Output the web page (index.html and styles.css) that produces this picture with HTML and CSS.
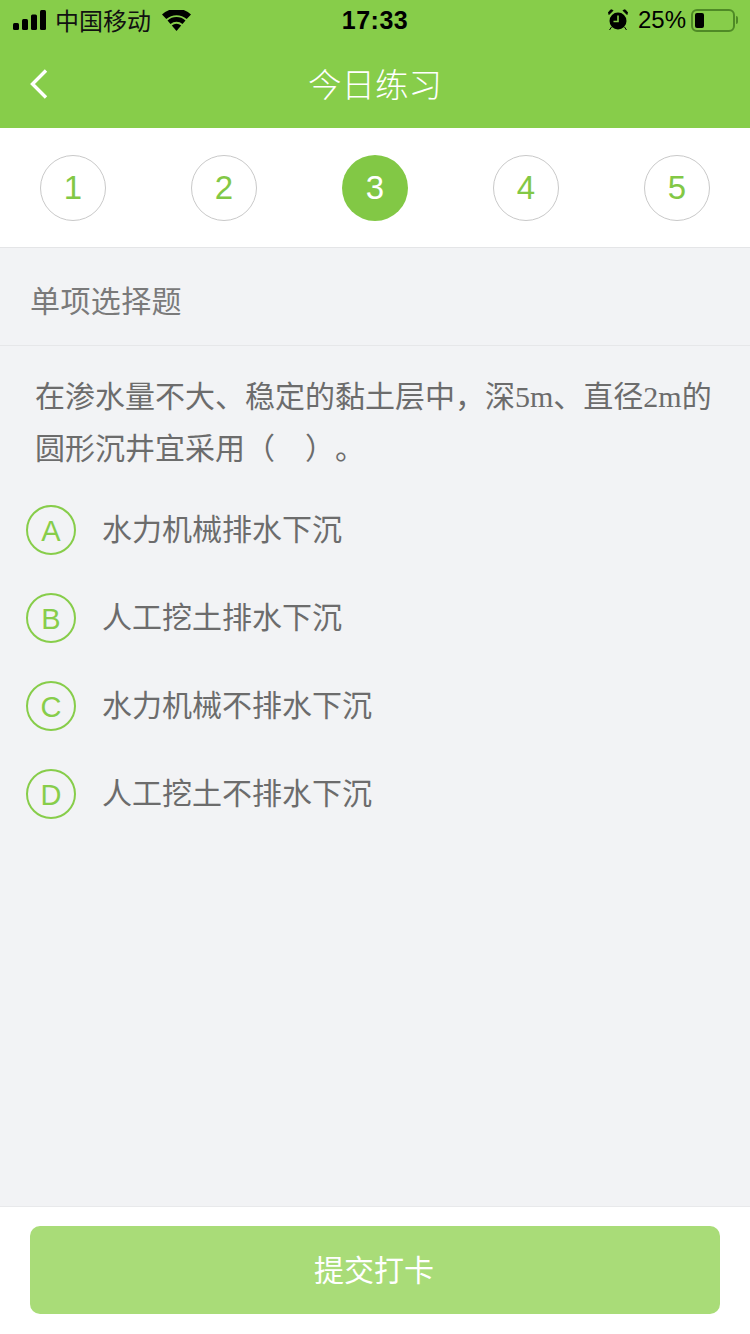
FILE: index.html
```html
<!DOCTYPE html>
<html lang="zh-CN">

<head>
    <meta charset="UTF-8">
    <meta name="viewport" content="width=device-width, initial-scale=1.0">
    <title>今日练习</title>
    <link rel="stylesheet" href="styles.css">
</head>

<body>
    <div class="header">
        <div class="status-bar">
            <div class="status-left">
                <svg class="signal" width="33" height="20" viewBox="0 0 33 20">
                    <rect x="0" y="13" width="6" height="7" rx="1.5" />
                    <rect x="9" y="9" width="6" height="11" rx="1.5" />
                    <rect x="18" y="4.500" width="6" height="15.500" rx="1.5" />
                    <rect x="27" y="0" width="6" height="20" rx="1.5" />
                </svg>
                <span class="carrier">中国移动</span>
                <svg class="wifi" width="29" height="21" viewBox="0 0 29 21">
                    <path d="M14.500 21l-4.700-5.500a7 7 0 0 1 9.400 0z" />
                    <path d="M8.500 14l-3-3.500a13.500 13.500 0 0 1 18 0l-3 3.500a9 9 0 0 0-12 0z" />
                    <path d="M4.300 9L0 4.500a21 21 0 0 1 29 0L24.700 9a15.500 15.500 0 0 0-20.400 0z" />
                </svg>
            </div>
            <div class="status-time">17:33</div>
            <div class="status-right">
                <svg class="alarm" width="20" height="22" viewBox="0 0 20 22">
                    <circle cx="10" cy="12" r="8.500" />
                    <path d="M1 5.500L5 1.500 3 .8 .6 3zM19 5.500L15 1.500 17 .8 19.400 3zM3.500 18l-2 3M16.500 18l2 3" stroke="#000" stroke-width="1" />
                    <path d="M10 6.500V12.500H5.500" fill="none" stroke="#87cd4a" stroke-width="1.600" />
                </svg>
                <span class="battery-text">25%</span>
                <div class="battery">
                    <div class="battery-level"></div>
                </div>
                <div class="battery-tip"></div>
            </div>
        </div>
        <div class="nav-bar">
            <svg class="back" width="20" height="32" viewBox="0 0 20 32">
                <path d="M17 2.500L3.500 16 17 29.500" fill="none" stroke="#fff" stroke-width="3.400" />
            </svg>
            <div class="nav-title">今日练习</div>
        </div>
    </div>

    <div class="steps">
        <div class="step">1</div>
        <div class="step">2</div>
        <div class="step active">3</div>
        <div class="step">4</div>
        <div class="step">5</div>
    </div>

    <div class="main">
        <div class="question-type">单项选择题</div>
        <div class="question">在渗水量不大、稳定的黏土层中，深<span class="latin">5m</span>、直径<span class="latin">2m</span>的圆形沉井宜采用（<span class="blank"></span>）。</div>
        <div class="options">
            <div class="option"><div class="option-mark">A</div><div class="option-text">水力机械排水下沉</div></div>
            <div class="option"><div class="option-mark">B</div><div class="option-text">人工挖土排水下沉</div></div>
            <div class="option"><div class="option-mark">C</div><div class="option-text">水力机械不排水下沉</div></div>
            <div class="option"><div class="option-mark">D</div><div class="option-text">人工挖土不排水下沉</div></div>
        </div>
    </div>

    <div class="footer">
        <button class="submit">提交打卡</button>
    </div>
</body>

</html>
```

FILE: styles.css
```css
* {
    box-sizing: border-box;
}

body {
    margin: 0;
    width: 750px;
    height: 1334px;
    display: flex;
    flex-direction: column;
    overflow: hidden;
    background-color: #f2f3f5;
    font-family: "Noto Sans CJK SC", "Liberation Sans", sans-serif;
}

.header {
    height: 128px;
    background-color: #87cd4a;
}

.status-bar {
    height: 40px;
    display: grid;
    grid-template-columns: 1fr auto 1fr;
    align-items: center;
    color: #000;
}

.status-left {
    display: flex;
    align-items: center;
    padding-left: 13px;
}

.carrier {
    margin-left: 9px;
    font-size: 24px;
    line-height: 40px;
    color: #111;
}

.wifi {
    margin-left: 11px;
}

.status-time {
    font-family: "Liberation Sans", sans-serif;
    font-size: 25px;
    font-weight: bold;
    letter-spacing: 0.5px;
}

.status-right {
    display: flex;
    align-items: center;
    justify-content: flex-end;
    padding-right: 12px;
}

.battery-text {
    margin-left: 10px;
    margin-right: 5px;
    font-family: "Liberation Sans", sans-serif;
    font-size: 24px;
}

.battery {
    width: 44px;
    height: 23px;
    padding: 2px;
    border: 2px solid #4f8a26;
    border-radius: 6px;
}

.battery-level {
    width: 9px;
    height: 100%;
    background-color: #000;
    border-radius: 2px;
}

.battery-tip {
    width: 2px;
    height: 8px;
    margin-left: 1px;
    background-color: #4f8a26;
    border-radius: 0 2px 2px 0;
}

.nav-bar {
    height: 88px;
    position: relative;
    display: flex;
    align-items: center;
    justify-content: center;
}

.back {
    position: absolute;
    left: 29px;
    top: 0;
    bottom: 0;
    margin: auto 0;
}

.nav-title {
    font-size: 33.5px;
    line-height: 48px;
    color: #fff;
    font-weight: 300;
    padding-bottom: 2px;
}

.steps {
    height: 120px;
    padding: 0 40px 0;
    display: flex;
    justify-content: space-between;
    align-items: center;
    background-color: #fff;
    border-bottom: 1px solid #e4e5e7;
}

.step {
    width: 66px;
    height: 66px;
    display: flex;
    align-items: center;
    justify-content: center;
    border: 1px solid #c9c9c9;
    border-radius: 50%;
    font-family: "Liberation Sans", sans-serif;
    font-size: 33px;
    color: #82c845;
}

.step.active {
    border: none;
    background-color: #82c845;
    color: #fff;
}

.main {
    flex: 1;
}

.question-type {
    height: 98px;
    padding: 5px 0 0 30px;
    display: flex;
    align-items: center;
    border-bottom: 1px solid #e6e7e9;
    font-size: 30px;
    letter-spacing: 0.4px;
    color: #7a7a7a;
}

.question {
    padding: 22px 34px 0 35px;
    font-size: 30px;
    line-height: 52px;
    color: #6c6c6c;
    text-spacing-trim: space-all;
}

.latin {
    font-family: "Liberation Serif", serif;
    line-height: 1;
}

.blank {
    display: inline-block;
    width: 30px;
}

.options {
    margin-top: 14px;
    padding-left: 26px;
}

.option {
    height: 88px;
    display: flex;
    align-items: center;
    gap: 26px;
    font-size: 30px;
    color: #6c6c6c;
}

.option-text {
    padding-bottom: 6px;
}

.option-mark {
    width: 50px;
    height: 50px;
    padding-top: 2px;
    display: flex;
    align-items: center;
    justify-content: center;
    border: 2px solid #87cd4a;
    border-radius: 50%;
    font-family: "Liberation Sans", sans-serif;
    font-size: 29px;
    color: #87cd4a;
}

.footer {
    height: 128px;
    padding: 19px 30px 20px;
    background-color: #fff;
    border-top: 1px solid #e8e9eb;
}

.submit {
    width: 100%;
    height: 88px;
    padding: 0 2px 4px 0;
    border: none;
    border-radius: 10px;
    background-color: #a9dc78;
    color: #fff;
    font-family: inherit;
    font-size: 30px;
}
```
